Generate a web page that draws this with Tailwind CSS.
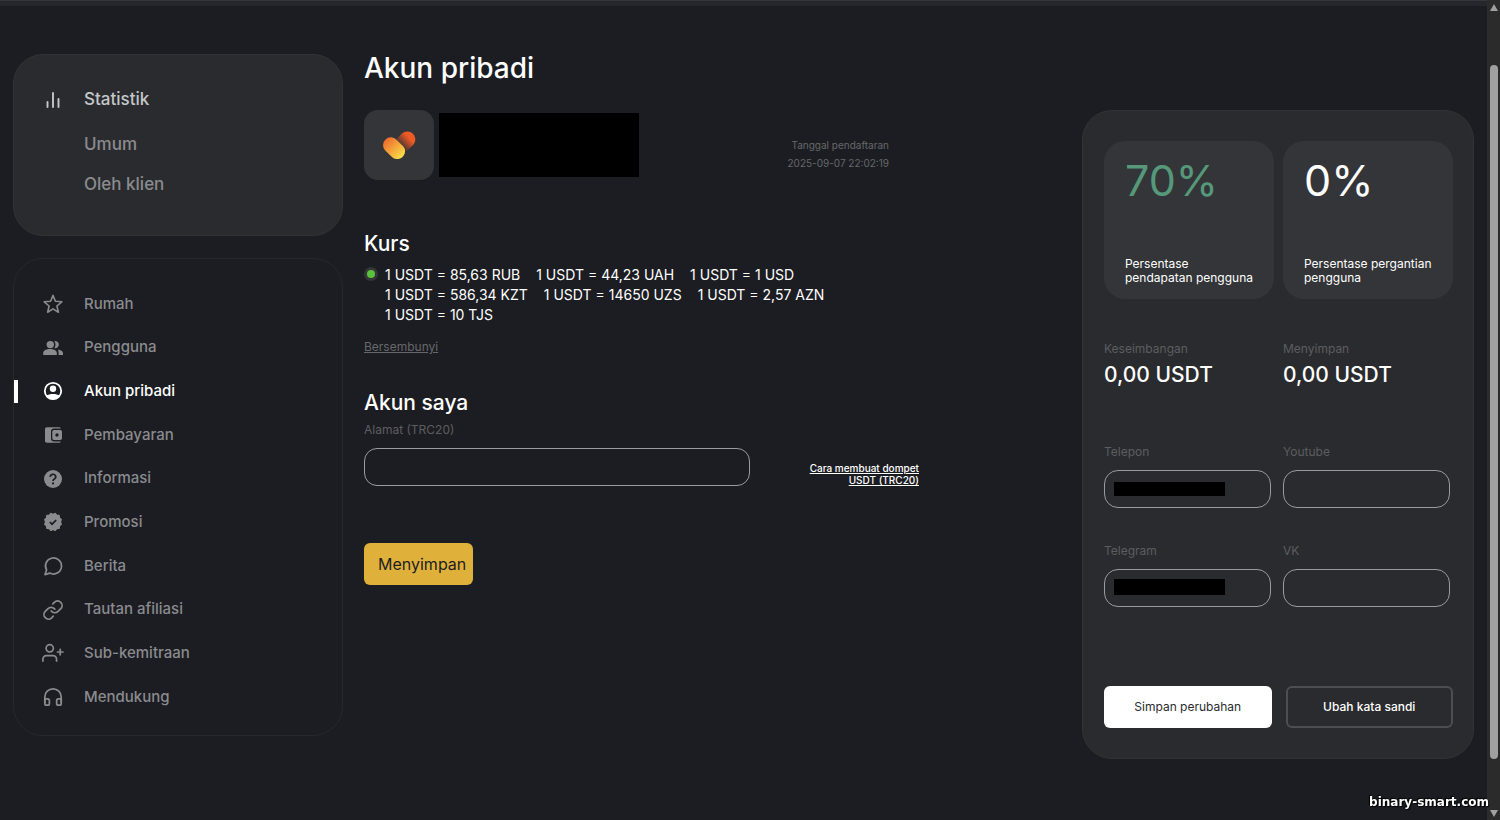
<!DOCTYPE html>
<html lang="id">
    <head>
        <meta charset="utf-8">
        <title>Akun pribadi</title>
        <meta name="viewport" content="width=device-width, initial-scale=1">
        <script src="https://cdn.jsdelivr.net/npm/@tailwindcss/browser@4"></script>
    </head>
    <body class="bg-[#1c1d22] text-white min-h-screen flex font-['Inter',sans-serif]">

        <div class="flex-1 min-w-0 flex flex-col">
            <div class="h-[6px] bg-[#25272c] border-t border-[#35363a]"></div>

            <main class="flex-1 flex items-start gap-[21px] pl-[13px] pr-[13px] pt-[45px]">

                <!-- Sidebar -->
                <aside class="w-[330px] shrink-0 pt-[3px] flex flex-col gap-[22px]">
                    <nav class="min-h-[182px] rounded-[30px] border border-[#323337] bg-[#2a2b2e] pt-[33px] pb-9 pl-[27px] text-[17px] font-medium">
                        <a href="#" class="flex items-center gap-[19px] h-6 text-[#c4c7c9]">
                            <svg class="w-6 h-6" viewBox="0 0 24 24" fill="none" stroke="currentColor" stroke-width="1.900" stroke-linecap="round"><path d="M6.500 19v-5M12 19V5M17.500 19v-8"/></svg>
                            Statistik
                        </a>
                        <div class="pl-[43px] mt-5 flex flex-col gap-4 text-[#8a8b8e]">
                            <a href="#" class="leading-6">Umum</a>
                            <a href="#" class="leading-6">Oleh klien</a>
                        </div>
                    </nav>

                    <nav class="relative min-h-[478px] rounded-[30px] border border-[#27282c] pt-[33px] pb-[26px] pl-[27px] flex flex-col justify-between text-[15px] font-medium text-[#8a8b8e]">
                        <a href="#" class="flex items-center gap-[19px] h-6">
                            <svg class="w-6 h-6" viewBox="0 0 24 24" fill="none" stroke="currentColor" stroke-width="1.600" stroke-linejoin="round"><path d="M12 3.400l2.400 5.900 6.400.5-4.900 4.200 1.500 6.200-5.400-3.300-5.400 3.300 1.500-6.200-4.900-4.200 6.400-.5z"/></svg>
                            Rumah
                        </a>
                        <a href="#" class="flex items-center gap-[19px] h-6">
                            <svg class="w-6 h-6" viewBox="0 0 24 24" fill="currentColor"><path d="M2.200 17c0-2.900 3.500-4 6.800-4s6.800 1.100 6.800 4v2H2.200z"/><circle cx="9.300" cy="8.600" r="3.700"/><path d="M13.300 5a3.700 3.700 0 1 1 0 7.200c1.600-2.100 1.600-5.100 0-7.200z"/><path d="M17 13.400c2.800.4 5 1.600 5 3.800V19h-4.400v-2c0-1.600-.1-2.600-.6-3.600z"/></svg>
                            Pengguna
                        </a>
                        <a href="#" class="flex items-center gap-[19px] h-6 text-white">
                            <span class="absolute left-0 w-1 h-[23px] bg-white"></span>
                            <svg class="w-6 h-6" viewBox="0 0 24 24"><circle cx="12" cy="12" r="8.200" fill="none" stroke="currentColor" stroke-width="1.800"/><circle cx="12" cy="9.800" r="3.200" fill="currentColor"/><path fill="currentColor" d="M5.200 17c1.600-1.400 4.200-2 6.800-2s5.200.6 6.800 2A8.500 8.500 0 0 1 12 20.500 8.500 8.500 0 0 1 5.200 17z"/></svg>
                            Akun pribadi
                        </a>
                        <a href="#" class="flex items-center gap-[19px] h-6">
                            <svg class="w-6 h-6" viewBox="0 0 24 24" fill="currentColor"><path d="M5.800 4.200H18a2 2 0 0 1 1.900 1.300H13A3 3 0 0 0 10 8.500v7a3 3 0 0 0 3 3h6.900A2 2 0 0 1 18 19.800H5.800a1.800 1.800 0 0 1-1.800-1.800V6a1.800 1.800 0 0 1 1.800-1.800z"/><path fill-rule="evenodd" d="M13 7h6.300A1.700 1.700 0 0 1 21 8.700v6.600a1.700 1.700 0 0 1-1.700 1.700H13a1.700 1.700 0 0 1-1.700-1.700V8.700A1.700 1.700 0 0 1 13 7zM16 10.300a1.700 1.700 0 1 0 0 3.400 1.700 1.700 0 0 0 0-3.400z"/></svg>
                            Pembayaran
                        </a>
                        <a href="#" class="flex items-center gap-[19px] h-6">
                            <svg class="w-6 h-6" viewBox="0 0 24 24"><circle cx="12" cy="12" r="9" fill="currentColor"/><path d="M9.300 9.900a2.700 2.500 0 1 1 4.100 2c-.9.600-1.400 1-1.400 2.100" fill="none" stroke="#1c1d22" stroke-width="1.700"/><circle cx="12" cy="16.400" r="1.100" fill="#1c1d22"/></svg>
                            Informasi
                        </a>
                        <a href="#" class="flex items-center gap-[19px] h-6">
                            <svg class="w-6 h-6" viewBox="0 0 24 24"><path fill="currentColor" stroke="currentColor" stroke-width="1.500" stroke-linejoin="round" d="M12 4.500l2.200-.9 1.500 1.800 2.400.2.200 2.400 1.900 1.600-.9 2.400.9 2.300-1.900 1.600-.2 2.400-2.400.2-1.500 1.800-2.200-.9-2.200.9-1.500-1.800-2.400-.2-.2-2.400-1.900-1.600.9-2.300-.9-2.400 1.900-1.600.2-2.400 2.400-.2 1.500-1.800z"/><path d="M8.800 12l2.200 2.200 4.200-4.200" fill="none" stroke="#1c1d22" stroke-width="1.700"/></svg>
                            Promosi
                        </a>
                        <a href="#" class="flex items-center gap-[19px] h-6">
                            <svg class="w-6 h-6" viewBox="0 0 24 24" fill="none" stroke="currentColor" stroke-width="1.700" stroke-linecap="round" stroke-linejoin="round"><path d="M20.500 12a8 8 0 0 1-11.700 7.100L4 20.600l1.600-4.600a8 8 0 1 1 14.900-4z"/></svg>
                            Berita
                        </a>
                        <a href="#" class="flex items-center gap-[19px] h-6">
                            <svg class="w-6 h-6" viewBox="0 0 24 24" fill="none" stroke="currentColor" stroke-width="1.900" stroke-linecap="round" stroke-linejoin="round"><g transform="translate(1.100 1.100) scale(.91)"><path d="M10 13a5 5 0 0 0 7.540.54l3-3a5 5 0 0 0-7.070-7.070l-1.720 1.710"/><path d="M14 11a5 5 0 0 0-7.540-.54l-3 3a5 5 0 0 0 7.070 7.070l1.710-1.710"/></g></svg>
                            Tautan afiliasi
                        </a>
                        <a href="#" class="flex items-center gap-[19px] h-6">
                            <svg class="w-6 h-6" viewBox="0 0 24 24" fill="none" stroke="currentColor" stroke-width="1.900" stroke-linecap="round" stroke-linejoin="round"><g transform="translate(1 1) scale(.91)"><path d="M16 21v-2a4 4 0 0 0-4-4H5a4 4 0 0 0-4 4v2"/><circle cx="8.500" cy="7" r="4"/><path d="M20 8v6M23 11h-6"/></g></svg>
                            Sub-kemitraan
                        </a>
                        <a href="#" class="flex items-center gap-[19px] h-6">
                            <svg class="w-6 h-6" viewBox="0 0 24 24" fill="none" stroke="currentColor" stroke-width="1.900" stroke-linecap="round" stroke-linejoin="round"><g transform="translate(1.100 1.100) scale(.91)"><path d="M3 18v-6a9 9 0 0 1 18 0v6"/><path d="M21 19a2 2 0 0 1-2 2h-1a2 2 0 0 1-2-2v-3a2 2 0 0 1 2-2h3zM3 19a2 2 0 0 0 2 2h1a2 2 0 0 0 2-2v-3a2 2 0 0 0-2-2H3z"/></g></svg>
                            Mendukung
                        </a>
                    </nav>
                </aside>

                <!-- Account -->
                <section class="flex-1 min-w-0">
                    <h1 class="text-[28px] leading-[34px] font-medium">Akun pribadi</h1>

                    <div class="mt-[25px] max-w-[525px] flex items-center">
                        <div class="w-[70px] h-[70px] rounded-[14px] bg-[#343538] flex items-center justify-center">
                            <svg class="w-9 h-7" viewBox="0 0 36 28">
                                <defs>
                                    <linearGradient id="pillBack" x1="0" y1="1" x2="1" y2="0"><stop offset=".3" stop-color="#3a3335"/><stop offset=".7" stop-color="#ee5a24"/></linearGradient>
                                    <linearGradient id="pillFront" x1="0" y1="0" x2="1" y2="1"><stop offset=".1" stop-color="#ef6a2c"/><stop offset=".9" stop-color="#fbdf4a"/></linearGradient>
                                </defs>
                                <path fill="url(#pillBack)" d="M21 2.500a8 8 0 0 1 11.300 11.300L23 22.500 14 9.500z"/>
                                <path fill="url(#pillFront)" d="M15.500 8.700l6.700 6.500A7.800 7.800 0 0 1 11.200 26.200L4.200 19.500A7.800 7.800 0 0 1 15.500 8.700z"/>
                            </svg>
                        </div>
                        <div class="ml-[5px] w-[200px] h-16 bg-black"></div>
                        <div class="ml-auto mt-[18px] text-right text-[10px] leading-[18px] text-[#66676a]">
                            <p>Tanggal pendaftaran</p>
                            <p>2025-09-07 22:02:19</p>
                        </div>
                    </div>

                    <h2 class="mt-[50px] text-[21px] leading-7 font-medium">Kurs</h2>
                    <div class="mt-[7px] flex gap-[7px] text-sm leading-5">
                        <span class="mt-[2px] w-[14px] h-[14px] shrink-0 rounded-full bg-[#343538] flex items-center justify-center">
                            <span class="w-2 h-2 rounded-full bg-[#5ac13e]"></span>
                        </span>
                        <ul class="max-w-[460px] flex flex-wrap gap-x-4">
                            <li>1 USDT = 85,63 RUB</li>
                            <li>1 USDT = 44,23 UAH</li>
                            <li>1 USDT = 1 USD</li>
                            <li>1 USDT = 586,34 KZT</li>
                            <li>1 USDT = 14650 UZS</li>
                            <li>1 USDT = 2,57 AZN</li>
                            <li>1 USDT = 10 TJS</li>
                        </ul>
                    </div>
                    <a href="#" class="mt-3 block w-fit text-xs leading-5 underline text-[#66676a]">Bersembunyi</a>

                    <form>
                        <h2 class="mt-8 text-[21px] leading-7 font-medium">Akun saya</h2>
                        <label for="address" class="mt-1 block text-xs leading-[18px] text-[#5c5d60]">Alamat (TRC20)</label>
                        <div class="mt-[9px] max-w-[555px] flex items-end justify-between">
                            <input type="text" id="address" class="w-[386px] h-[38px] rounded-[13px] border border-[#9b9b9d] px-3">
                            <a href="#" class="w-[120px] text-right text-[10px] leading-3 font-medium underline">Cara membuat dompet USDT (TRC20)</a>
                        </div>
                        <button type="submit" class="mt-[57px] h-[42px] pl-[14px] pr-[7px] rounded-md bg-[#dfb13b] text-[#1c1d22]">Menyimpan</button>
                    </form>
                </section>

                <!-- Balance and contacts -->
                <form class="w-[392px] shrink-0 mt-[59px] rounded-[30px] border border-[#323337] bg-[#2a2b2e] pt-[30px] pb-[30px] pl-[21px] pr-5">
                    <div class="grid grid-cols-2 gap-x-[9px]">
                        <div class="h-[158px] rounded-[21px] bg-[#343538] pt-[14px] pb-[14px] pl-[21px] flex flex-col justify-between">
                            <p class="text-[43px] leading-[50px] text-[#55997a]">70%</p>
                            <p class="text-xs leading-[14px]">Persentase<br>pendapatan pengguna</p>
                        </div>
                        <div class="h-[158px] rounded-[21px] bg-[#343538] pt-[14px] pb-[14px] pl-[21px] flex flex-col justify-between">
                            <p class="text-[43px] leading-[50px]">0%</p>
                            <p class="text-xs leading-[14px]">Persentase pergantian<br>pengguna</p>
                        </div>
                        <div class="mt-[42px]">
                            <p class="text-xs leading-4 text-[#5c5d60]">Keseimbangan</p>
                            <p class="mt-1 text-[21px] leading-7 font-medium">0,00 USDT</p>
                        </div>
                        <div class="mt-[42px]">
                            <p class="text-xs leading-4 text-[#5c5d60]">Menyimpan</p>
                            <p class="mt-1 text-[21px] leading-7 font-medium">0,00 USDT</p>
                        </div>
                    </div>

                    <div class="mt-[55px] grid grid-cols-2 gap-x-[9px] gap-y-[35px]">
                        <div>
                            <label for="phone" class="block text-xs leading-4 text-[#5c5d60]">Telepon</label>
                            <div class="relative mt-[10px] mr-[3px]">
                                <input type="text" id="phone" class="block w-full h-[38px] rounded-[14px] border border-[#9b9b9d] px-3">
                                <span class="absolute left-[10px] top-3 w-[111px] h-[14px] bg-black"></span>
                            </div>
                        </div>
                        <div>
                            <label for="youtube" class="block text-xs leading-4 text-[#5c5d60]">Youtube</label>
                            <div class="mt-[10px] mr-[3px]">
                                <input type="text" id="youtube" class="block w-full h-[38px] rounded-[14px] border border-[#9b9b9d] px-3">
                            </div>
                        </div>
                        <div>
                            <label for="telegram" class="block text-xs leading-4 text-[#5c5d60]">Telegram</label>
                            <div class="relative mt-[10px] mr-[3px]">
                                <input type="text" id="telegram" class="block w-full h-[38px] rounded-[14px] border border-[#9b9b9d] px-3">
                                <span class="absolute left-[10px] top-[10px] w-[111px] h-4 bg-black"></span>
                            </div>
                        </div>
                        <div>
                            <label for="vk" class="block text-xs leading-4 text-[#5c5d60]">VK</label>
                            <div class="mt-[10px] mr-[3px]">
                                <input type="text" id="vk" class="block w-full h-[38px] rounded-[14px] border border-[#9b9b9d] px-3">
                            </div>
                        </div>
                    </div>

                    <div class="mt-[79px] grid grid-cols-2 gap-[14px] text-xs">
                        <button type="submit" class="h-[42px] rounded-md bg-white text-[#2a2b2e]">Simpan perubahan</button>
                        <button type="button" class="h-[42px] rounded-md border-2 border-[#4d4e51] font-medium">Ubah kata sandi</button>
                    </div>
                </form>
            </main>
        </div>

        <!-- Scroll track -->
        <div class="w-[13px] shrink-0 bg-[#2b2b2b] flex flex-col items-center justify-between pt-1 pb-[3px]">
            <svg class="w-2 h-[7px]" viewBox="0 0 8 7" fill="#a0a0a0"><path d="M4 0l4 7H0z"/></svg>
            <div class="mt-[54px] mb-[51px] flex-1 w-2 rounded-full bg-[#a0a0a0]"></div>
            <svg class="w-2 h-[7px]" viewBox="0 0 8 7" fill="#a0a0a0"><path d="M4 7L0 0h8z"/></svg>
        </div>

        <p class="fixed right-[11px] bottom-[10px] text-xs leading-4 font-bold font-['DejaVu_Sans',sans-serif] [text-shadow:1px_1px_1px_#000,-1px_-1px_1px_#000]">binary-smart.com</p>
    </body>
</html>
